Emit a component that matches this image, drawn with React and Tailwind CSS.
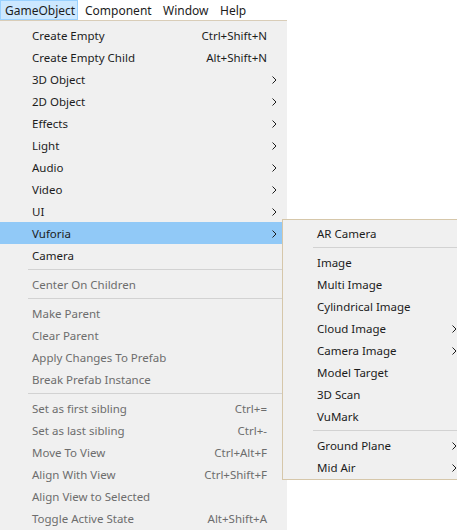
import React from "react";

const mainItems = [
  { label: "Create Empty", shortcut: "Ctrl+Shift+N" },
  { label: "Create Empty Child", shortcut: "Alt+Shift+N" },
  { label: "3D Object", sub: true },
  { label: "2D Object", sub: true },
  { label: "Effects", sub: true },
  { label: "Light", sub: true },
  { label: "Audio", sub: true },
  { label: "Video", sub: true },
  { label: "UI", sub: true },
  { label: "Vuforia", sub: true, active: true },
  { label: "Camera" },
  { sep: true },
  { label: "Center On Children", disabled: true },
  { sep: true },
  { label: "Make Parent", disabled: true },
  { label: "Clear Parent", disabled: true },
  { label: "Apply Changes To Prefab", disabled: true },
  { label: "Break Prefab Instance", disabled: true },
  { sep: true },
  { label: "Set as first sibling", shortcut: "Ctrl+=", disabled: true },
  { label: "Set as last sibling", shortcut: "Ctrl+-", disabled: true },
  { label: "Move To View", shortcut: "Ctrl+Alt+F", disabled: true },
  { label: "Align With View", shortcut: "Ctrl+Shift+F", disabled: true },
  { label: "Align View to Selected", disabled: true },
  { label: "Toggle Active State", shortcut: "Alt+Shift+A", disabled: true },
];

const vuforiaItems = [
  { label: "AR Camera" },
  { sep: true },
  { label: "Image" },
  { label: "Multi Image" },
  { label: "Cylindrical Image" },
  { label: "Cloud Image", sub: true },
  { label: "Camera Image", sub: true },
  { label: "Model Target" },
  { label: "3D Scan" },
  { label: "VuMark" },
  { sep: true },
  { label: "Ground Plane", sub: true },
  { label: "Mid Air", sub: true },
];

function Chevron() {
  return (
    <svg width="5" height="8" viewBox="0 0 5 8" className="ml-[5px]">
      <polyline points="0.5,0.5 4,4 0.5,7.5" fill="none" stroke="#1c1c1c" strokeWidth="1" />
    </svg>
  );
}

function MenuRow({ item, indent }) {
  if (item.sep) {
    return (
      <div className="h-[7px] flex items-center">
        <div className={`${indent === 34 ? "ml-[30px]" : "ml-[28px]"} flex-1 border-t border-[#d2d2d2]`} />
      </div>
    );
  }
  return (
    <div
      className={`flex items-center h-[22px] pt-[1px] mr-[4px] ${
        item.active ? "bg-[#91c9f7]" : ""
      } ${item.disabled ? "text-[#6d6d6d]" : "text-[#1c1c1c]"}`}
    >
      <span className={`flex-1 whitespace-nowrap ${indent === 34 ? "pl-[34px]" : "pl-[32px]"}`}>
        {item.label}
      </span>
      {item.shortcut && <span className="whitespace-nowrap">{item.shortcut}</span>}
      <span className="w-[16px] flex items-center">{item.sub && <Chevron />}</span>
    </div>
  );
}

export default function App() {
  return (
    <div className="relative w-[457px] h-[530px] bg-white overflow-hidden font-['Noto_Sans',sans-serif] text-[11.5px] leading-none">
      {/* menu bar */}
      <div className="flex h-[20px] items-center pt-[2px] text-[#1c1c1c] text-[12px]">
        <div className="h-[20px] -mt-[2px] pt-[2px] w-[78px] pl-[4px] flex items-center bg-[#cce8ff] border border-[#99d1ff]">
          GameObject
        </div>
        <div className="w-[78px] pl-[7px]">Component</div>
        <div className="w-[57px] pl-[7px]">Window</div>
        <div className="pl-[7px]">Help</div>
      </div>

      {/* GameObject menu */}
      <div className="w-[287px] bg-[#f0f0f0] border-t border-[#d9cdb8] pt-[3px] pb-[10px]">
        {mainItems.map((item, i) => (
          <MenuRow key={i} item={item} indent={32} />
        ))}
      </div>

      {/* Vuforia submenu */}
      <div className="absolute left-[282px] top-[219px] w-[186px] bg-[#f0f0f0] border border-[#d6c7aa] pt-[2px] pb-[1px]">
        {vuforiaItems.map((item, i) => (
          <MenuRow key={i} item={item} indent={34} />
        ))}
      </div>
    </div>
  );
}
